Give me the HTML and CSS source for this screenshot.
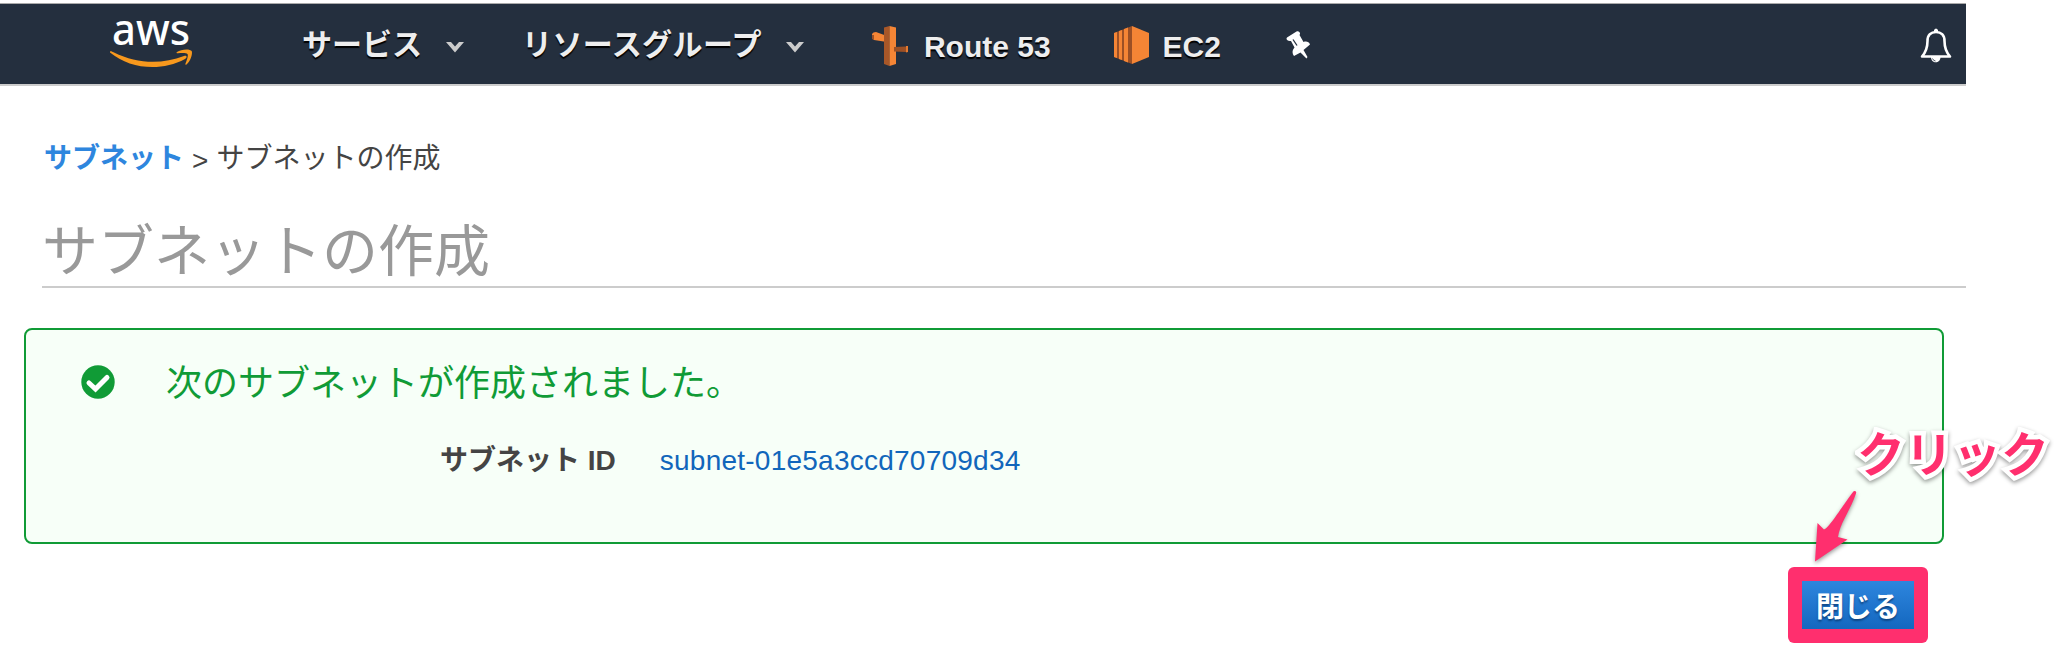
FILE: index.html
```html
<!DOCTYPE html>
<html lang="ja">
<head>
<meta charset="utf-8">
<title>サブネットの作成</title>
<link rel="stylesheet" href="styles.css">
</head>
<body>
<div class="console">
  <nav class="navbar">
    <svg class="logo" width="84" height="66" viewBox="0 -14 84 66">
      <text class="logo-text" x="2" y="26.500" textLength="78" lengthAdjust="spacingAndGlyphs">aws</text>
      <path fill="#f7981d" d="M0 33.500C1 32.600 2 33.600 4 34.500C27 46 52 46.500 74 38C77 37 77.500 39.500 75 41C51 54 20 51 0 34.500Z"/>
      <path fill="#f7981d" d="M67 34C71 31 80 30.500 81.700 33C83 36 80 44 76.500 46.500C75.500 47 75 46.500 75.500 45.500C77 42 78.500 37.500 77.500 36C76 34.500 71 35 68 35.300C66.500 35.300 66 34.700 67 34Z"/>
    </svg>
    <div class="menu menu-services"><span>サービス</span><svg width="18" height="11" viewBox="0 0 18 11"><path d="M0 0H5L9 4.500 13 0H18L9 10.500Z" fill="#ccc"/></svg></div>
    <div class="menu menu-groups"><span>リソースグループ</span><svg width="18" height="11" viewBox="0 0 18 11"><path d="M0 0H5L9 4.500 13 0H18L9 10.500Z" fill="#ccc"/></svg></div>
    <div class="shortcut route">
      <svg width="38" height="40" viewBox="0 0 38 40">
        <path fill="#f58535" d="M1 8Q2 6 5 6L16 10V16L3 14Q1 13 1 8Z"/><path fill="#9c5025" d="M1 9L3 9V14L1 13Z"/>
        <path fill="#a85728" d="M13 1.500L18.500 0V40L13 38Z"/><path fill="#f58535" d="M18.500 0L25 1.500V38L18.500 40Z"/>
        <path fill="#9c5025" d="M23 21L35 20.500V26L23 25.500Z"/><path fill="#e47a30" d="M35 20H37V26L35 26.500Z"/>
      </svg>
      <span>Route 53</span>
    </div>
    <div class="shortcut ec2">
      <svg width="35" height="38" viewBox="0 0 35 38">
        <path fill="#9c5025" d="M0 7L18 0V38L0 31Z"/>
        <path fill="#f58535" d="M18 0L35 7V31L18 38Z"/>
        <path fill="#f58535" d="M0 7L3 6V32L0 31ZM5 5L8 4V34L5 33ZM10 3L14 1.500V36.500L10 35Z"/>
      </svg>
      <span>EC2</span>
    </div>
    <svg class="pin" width="25" height="28" viewBox="0 0 25 28">
      <path fill="#fff" d="M1 6.500L10.500 .5C13 -.5 15 2 13.500 4L17.500 11C20 10 23 10.500 24 13.500L17.500 19L21.500 26 20.500 27.500 14.500 21.500 8 25C6 22.500 6 19.500 8.500 16.500L5 10C1.500 10.500 -.5 8.500 1 6.500Z"/>
      <path d="M7 8.500L11 14.500" stroke="#242f3e" stroke-width="1.300"/>
    </svg>
    <svg class="bell" width="32" height="36" viewBox="0 0 32 36">
      <path fill="none" stroke="#fff" stroke-width="2.600" stroke-linejoin="round" d="M2 28.500C6 24 7.500 20 7.500 13C7.500 7 11 4 16 4S24.500 7 24.500 13C24.500 20 26 24 30 28.500Z"/>
      <path fill="#fff" d="M14 4V2Q16 -1 18 2V4ZM11 29H20.500C20.500 36 11 36 11 29Z"/>
      <path d="M12.500 30.500Q13.500 33 15.500 33" fill="none" stroke="#242f3e" stroke-width=".8"/>
    </svg>
  </nav>
  <div class="breadcrumb"><a class="crumb-link">サブネット</a><span class="sep">&gt;</span><span>サブネットの作成</span></div>
  <h1 class="title">サブネットの作成</h1>
  <section class="notice">
    <div class="notice-head">
      <svg width="34" height="34" viewBox="0 0 34 34"><circle cx="17" cy="17" r="16.700" fill="#109b36"/><path d="M8 18L14.500 24 26 12.500" fill="none" stroke="#fff" stroke-width="5" stroke-linecap="round"/></svg>
      <span>次のサブネットが作成されました。</span>
    </div>
    <div class="detail"><span class="label">サブネット ID</span><a class="subnet">subnet-01e5a3ccd70709d34</a></div>
  </section>
  <div class="actions"><div class="highlight"><button class="close">閉じる</button></div></div>
</div>
<div class="callout">クリック</div>
<svg class="arrow" width="50" height="80" viewBox="0 0 50 80">
  <path fill="#ff2f6e" d="M42 2C43 0 46 1 45 3.500C40 19 29 33 27 47L36.500 49.500 4 71.500 6.500 33 13 39.500C18 38 30 18 42 2Z"/>
</svg>
</body>
</html>
```
FILE: styles.css
```css
body {
  margin: 0;
  position: relative;
  width: 2070px;
  height: 650px;
  overflow: hidden;
  background: #fff;
  color: #444;
  font-family: "Liberation Sans", "Noto Sans CJK JP", sans-serif;
}
.console { width: 1966px; padding-top: 3px; }
.navbar {
  display: flex;
  align-items: flex-start;
  box-sizing: border-box;
  height: 83px;
  border-top: 1px solid #aaa;
  border-bottom: 2px solid #ccc;
  background: #242f3e;
  color: #eee;
  font-size: 30px;
  font-weight: bold;
  line-height: 40px;
  text-shadow: 0 2px 1px #000;
}
.logo { margin: 0 0 0 110px; overflow: visible; }
.logo-text {
  font-family: "Noto Sans", sans-serif;
  font-size: 43px;
  font-weight: 500;
  fill: #fff;
  text-shadow: none;
}
.menu { display: flex; align-items: center; gap: 24px; padding-top: 21px; white-space: nowrap; }
.menu svg { margin-top: 5px; }
.menu-services { margin-left: 108px; }
.menu-groups { margin-left: 58px; letter-spacing: .4px; }
.shortcut { display: flex; }
.shortcut svg { margin-top: 22px; }
.shortcut span { padding-top: 23px; white-space: nowrap; }
.route { margin-left: 67px; gap: 15px; }
.ec2 { margin-left: 63px; gap: 14px; }
.pin { margin: 27px 0 0 65px; }
.bell { margin: 24px 14px 0 auto; }
.breadcrumb {
  display: flex;
  margin: 52px 0 0 44px;
  font-size: 28px;
  line-height: 42px;
}
.crumb-link { color: #2e86de; font-weight: bold; }
.sep { margin: 2px 8px 0; line-height: 42px; }
.title {
  box-sizing: border-box;
  height: 82px;
  margin: 24px 0 0 42px;
  border-bottom: 2px solid #ccc;
  color: #999;
  font-size: 56px;
  font-weight: normal;
  line-height: 92px;
}
.notice {
  box-sizing: border-box;
  width: 1920px;
  height: 216px;
  margin: 40px 0 0 24px;
  padding: 29px 0 0 55px;
  border: 2px solid #109b36;
  border-radius: 8px;
  background: #f7fff8;
}
.notice-head {
  display: flex;
  align-items: center;
  gap: 51px;
  height: 46px;
  color: #109b36;
  font-size: 36px;
  line-height: 46px;
}
.notice-head span { padding-top: 3px; }
.detail { display: flex; gap: 44px; margin: 36px 0 0 359px; font-size: 28px; line-height: 40px; }
.label { font-weight: bold; }
.subnet { color: #1166bb; letter-spacing: .24px; }
.actions { display: flex; justify-content: flex-end; padding: 23px 38px 0 0; }
.highlight { padding: 14px; border-radius: 6px; background: #ff2f6e; }
.close {
  display: block;
  width: 112px;
  height: 48px;
  padding: 6px 0 0;
  border: 0;
  background: linear-gradient(#2e86de, #1467bf);
  color: #fff;
  font: bold 28px/42px "Liberation Sans", "Noto Sans CJK JP", sans-serif;
  text-shadow: 0 2px 2px #0f4583;
}
.callout {
  position: absolute;
  left: 1857px;
  top: 420px;
  color: #ff2f6e;
  font-size: 48px;
  font-weight: bold;
  line-height: 72px;
  -webkit-text-stroke: 9px #fff;
  paint-order: stroke fill;
  stroke-linejoin: round;
  filter: drop-shadow(0 2px 2px rgba(0, 0, 0, .4));
}
.arrow {
  position: absolute;
  left: 1811px;
  top: 490px;
  filter: drop-shadow(0 2px 2px rgba(0, 0, 0, .4));
}
```
